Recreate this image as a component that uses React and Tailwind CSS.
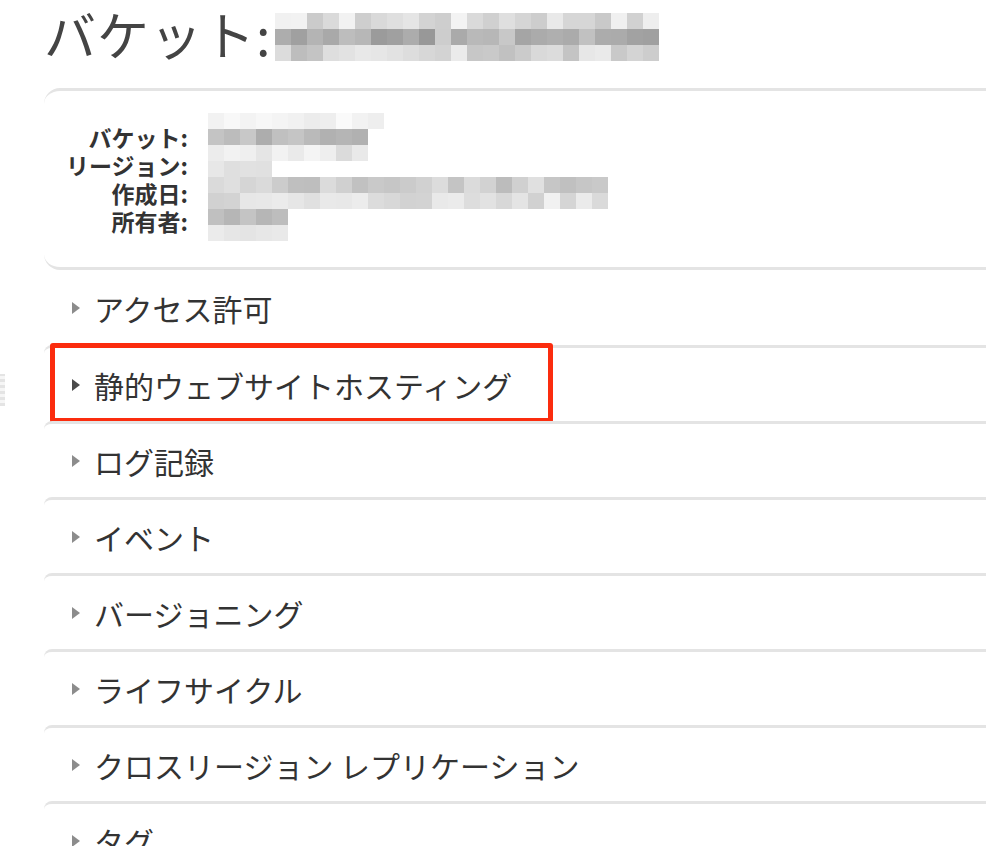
import React from "react";

// blurred (mosaic) placeholders, one entry per cell row: [cells, lightest, darkest]
const titleBlur = [
  [24, 200, 246],
  [24, 150, 205],
  [24, 185, 236],
];

const infoBlur = [
  [11, 236, 250],
  [10, 170, 205],
  [10, 215, 245],
  [4, 192, 235],
  [25, 185, 226],
  [25, 206, 242],
  [5, 180, 202],
  [5, 226, 242],
];

const sections = [
  "アクセス許可",
  "静的ウェブサイトホスティング",
  "ログ記録",
  "イベント",
  "バージョニング",
  "ライフサイクル",
  "クロスリージョン レプリケーション",
  "タグ",
];

const Mosaic = ({ rows, seed }) => {
  let s = seed;
  const next = () => {
    s = (s * 9301 + 49297) % 233280;
    return s / 233280;
  };
  return (
    <div className="flex flex-col">
      {rows.map(([count, lo, hi], r) => (
        <div key={r} className="flex">
          {Array.from({ length: count }).map((_, c) => {
            const g = Math.round(lo + (hi - lo) * next());
            return (
              <div
                key={c}
                className="w-4 h-4"
                style={{ backgroundColor: `rgb(${g},${g},${g})` }}
              />
            );
          })}
        </div>
      ))}
    </div>
  );
};

const Arrow = ({ dark }) => (
  <svg width="8" height="12" viewBox="0 0 8 12" className="shrink-0">
    <path d="M0 0 L8 6 L0 12 Z" fill={dark ? "#4a4a4a" : "#8c8c8c"} />
  </svg>
);

const App = () => {
  return (
    <div className="relative h-[846px] bg-white overflow-hidden pl-[44px] pt-1 font-['Noto_Sans_CJK_JP','Noto_Sans',sans-serif]">
      {/* clipped widget at the left edge */}
      <div className="absolute left-0 top-[374px] w-[5px] h-[32px] bg-[repeating-linear-gradient(0deg,#e4e4e4_0px,#e4e4e4_3px,#f6f6f6_3px,#f6f6f6_6px)]" />

      <div className="flex items-center h-[60px] mb-6">
        <h1 className="text-[52px] leading-[60px] text-[#444] tracking-[1px]">
          バケット:
        </h1>
        <div className="ml-[4px] mt-[6px]">
          <Mosaic rows={titleBlur} seed={17} />
        </div>
      </div>

      <div className="flex border-t-[3px] border-b-[3px] border-[#e4e4e4] rounded-l-2xl h-[182px]">
        <div className="w-[144px] pt-[32px] text-right text-[23px] leading-[28px] font-bold text-[#333] whitespace-nowrap">
          <div>バケット:</div>
          <div>リージョン:</div>
          <div>作成日:</div>
          <div>所有者:</div>
        </div>
        <div className="ml-[20px] pt-[22px]">
          <Mosaic rows={infoBlur} seed={5} />
        </div>
      </div>

      <div className="flex flex-col">
        {sections.map((name, i) => (
          <div
            key={name}
            className={`relative flex items-center gap-[14px] pl-[28px] text-[30px] text-[#333] ${
              i === 0
                ? "h-[75px]"
                : "h-[76px] border-t-[3px] border-[#e4e4e4] rounded-tl-lg"
            }`}
          >
            <Arrow dark={i === 1} />
            <span className="leading-none whitespace-pre">{name}</span>
            {i === 1 && (
              <div className="absolute left-[6px] top-[-5px] w-[503px] h-[80px] border-[5px] border-[#fb2c0e] rounded-[3px]" />
            )}
          </div>
        ))}
      </div>
    </div>
  );
};

export default App;
